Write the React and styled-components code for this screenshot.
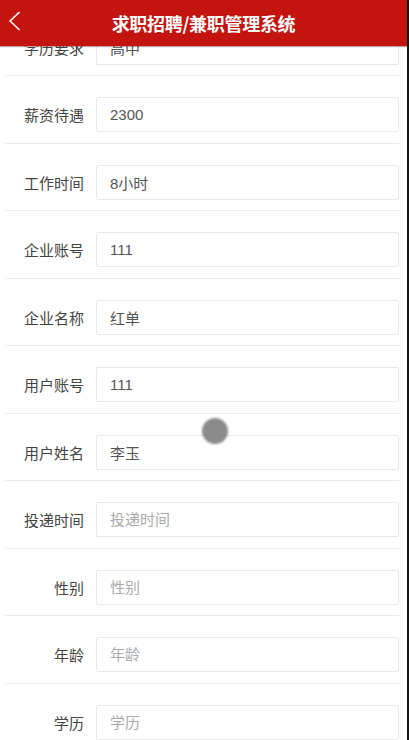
import * as React from 'react';
import styled, { createGlobalStyle } from 'styled-components';

const GlobalStyle = createGlobalStyle`
  html, body {
    margin: 0;
    padding: 0;
    background: #fff;
    font-family: "Noto Sans CJK SC", "Noto Sans", "Liberation Sans", sans-serif;
  }
  * { box-sizing: border-box; }
`;

const Page = styled.div`
  position: relative;
  height: 740px;
  overflow: hidden;
  border-right: 2px solid #151515;
  background: #fff;
`;

const Header = styled.header`
  position: absolute;
  top: 0;
  left: 0;
  right: 0;
  height: 46px;
  z-index: 10;
  display: flex;
  align-items: center;
  justify-content: center;
  background: #c3140f;
  box-shadow: 0 1px 1px rgba(90, 0, 0, 0.35);
`;

const BackButton = styled.button`
  position: absolute;
  left: 5px;
  top: 10px;
  width: 18px;
  height: 22px;
  padding: 0;
  border: 0;
  background: none;
  display: flex;
  align-items: center;
  justify-content: center;
`;

const Title = styled.h1`
  margin: 0;
  color: #fff;
  font-size: 18px;
  font-weight: 700;
  letter-spacing: -0.3px;
  line-height: 1;
`;

const Form = styled.div`
  padding: 8.5px 8px 0 5px;
`;

const Row = styled.div`
  display: flex;
  align-items: flex-start;
  height: 67.5px;
  padding-top: 21px;
  border-bottom: 1px solid #ebebeb;
`;

const Label = styled.label`
  width: 91px;
  padding-right: 12px;
  flex: none;
  height: 35px;
  line-height: 35px;
  text-align: right;
  font-size: 15px;
  color: #444;
  white-space: nowrap;
`;

const Field = styled.input`
  flex: 1;
  min-width: 0;
  height: 35px;
  margin: 0;
  padding: 0 13px;
  border: 1px solid #e8e8e8;
  border-radius: 2px;
  outline: none;
  background: #fff;
  font-family: "Liberation Sans", "Noto Sans CJK SC", sans-serif;
  font-size: 15px;
  color: #555;

  &::placeholder {
    color: #aaa;
  }
`;

const Touch = styled.div`
  position: absolute;
  left: 202px;
  top: 418px;
  width: 26px;
  height: 26px;
  border-radius: 50%;
  background: #858585;
  filter: blur(0.8px);
  opacity: 0.95;
  z-index: 20;
`;

const fields = [
  { label: '学历要求', value: '高中' },
  { label: '薪资待遇', value: '2300' },
  { label: '工作时间', value: '8小时' },
  { label: '企业账号', value: '111' },
  { label: '企业名称', value: '红单' },
  { label: '用户账号', value: '111' },
  { label: '用户姓名', value: '李玉' },
  { label: '投递时间', placeholder: '投递时间' },
  { label: '性别', placeholder: '性别' },
  { label: '年龄', placeholder: '年龄' },
  { label: '学历', placeholder: '学历' },
];

export default function App() {
  return (
    <Page>
      <GlobalStyle />
      <Header>
        <BackButton aria-label="返回">
          <svg width="14" height="20" viewBox="0 0 14 20" fill="none">
            <path d="M12 1.5 L3 10 L12 18.5" stroke="#fff" strokeWidth="1.6" strokeLinecap="round" strokeLinejoin="round" />
          </svg>
        </BackButton>
        <Title>求职招聘/兼职管理系统</Title>
      </Header>
      <Form>
        {fields.map((f) => (
          <Row key={f.label}>
            <Label>{f.label}</Label>
            <Field defaultValue={f.value} placeholder={f.placeholder} readOnly />
          </Row>
        ))}
      </Form>
      <Touch />
    </Page>
  );
}
